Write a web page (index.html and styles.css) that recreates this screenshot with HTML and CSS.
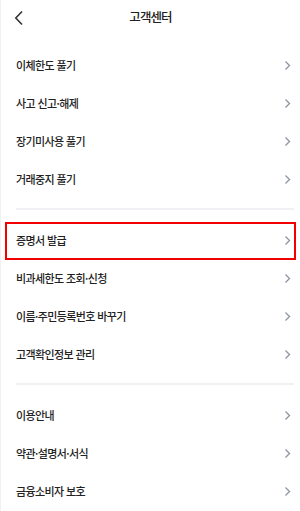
FILE: index.html
```html
<!DOCTYPE html>
<html lang="ko">
<head>
<meta charset="utf-8">
<link rel="stylesheet" href="styles.css">
</head>
<body>
<div class="page">
  <header class="top">
    <svg class="back" width="10" height="16" viewBox="0 0 10 16"><polyline points="8,1.5 1.8,8 8,14.5" fill="none" stroke="#333" stroke-width="1.6"/></svg>
    <h1 class="title">고객센터</h1>
  </header>
  <ul class="group">
    <li class="row"><span>이체한도 풀기</span><svg class="chev" width="7" height="11" viewBox="0 0 7 11"><polyline points="1.5,1.5 5.5,5.5 1.5,9.5" fill="none" stroke="#8c94a3" stroke-width="1.3"/></svg></li>
    <li class="row"><span>사고 신고·해제</span><svg class="chev" width="7" height="11" viewBox="0 0 7 11"><polyline points="1.5,1.5 5.5,5.5 1.5,9.5" fill="none" stroke="#8c94a3" stroke-width="1.3"/></svg></li>
    <li class="row"><span>장기미사용 풀기</span><svg class="chev" width="7" height="11" viewBox="0 0 7 11"><polyline points="1.5,1.5 5.5,5.5 1.5,9.5" fill="none" stroke="#8c94a3" stroke-width="1.3"/></svg></li>
    <li class="row"><span>거래중지 풀기</span><svg class="chev" width="7" height="11" viewBox="0 0 7 11"><polyline points="1.5,1.5 5.5,5.5 1.5,9.5" fill="none" stroke="#8c94a3" stroke-width="1.3"/></svg></li>
  </ul>
  <div class="sep"></div>
  <ul class="group">
    <li class="row hl"><span>증명서 발급</span><svg class="chev" width="7" height="11" viewBox="0 0 7 11"><polyline points="1.5,1.5 5.5,5.5 1.5,9.5" fill="none" stroke="#8c94a3" stroke-width="1.3"/></svg></li>
    <li class="row"><span>비과세한도 조회·신청</span><svg class="chev" width="7" height="11" viewBox="0 0 7 11"><polyline points="1.5,1.5 5.5,5.5 1.5,9.5" fill="none" stroke="#8c94a3" stroke-width="1.3"/></svg></li>
    <li class="row"><span>이름·주민등록번호 바꾸기</span><svg class="chev" width="7" height="11" viewBox="0 0 7 11"><polyline points="1.5,1.5 5.5,5.5 1.5,9.5" fill="none" stroke="#8c94a3" stroke-width="1.3"/></svg></li>
    <li class="row"><span>고객확인정보 관리</span><svg class="chev" width="7" height="11" viewBox="0 0 7 11"><polyline points="1.5,1.5 5.5,5.5 1.5,9.5" fill="none" stroke="#8c94a3" stroke-width="1.3"/></svg></li>
  </ul>
  <div class="sep"></div>
  <ul class="group">
    <li class="row"><span>이용안내</span><svg class="chev" width="7" height="11" viewBox="0 0 7 11"><polyline points="1.5,1.5 5.5,5.5 1.5,9.5" fill="none" stroke="#8c94a3" stroke-width="1.3"/></svg></li>
    <li class="row"><span>약관·설명서·서식</span><svg class="chev" width="7" height="11" viewBox="0 0 7 11"><polyline points="1.5,1.5 5.5,5.5 1.5,9.5" fill="none" stroke="#8c94a3" stroke-width="1.3"/></svg></li>
    <li class="row"><span>금융소비자 보호</span><svg class="chev" width="7" height="11" viewBox="0 0 7 11"><polyline points="1.5,1.5 5.5,5.5 1.5,9.5" fill="none" stroke="#8c94a3" stroke-width="1.3"/></svg></li>
  </ul>
</div>
</body>
</html>
```
FILE: styles.css
```css
html, body {
  margin: 0;
  padding: 0;
  background: #fff;
}
body {
  font-family: "Noto Sans CJK KR", "Noto Sans", sans-serif;
  color: #222;
}
.page {
  width: 300px;
  height: 511px;
  box-sizing: border-box;
  border-left: 1px solid #f1f1f3;
  overflow: hidden;
}
.top {
  position: relative;
  height: 46px;
  display: flex;
  justify-content: center;
}
.back {
  position: absolute;
  left: 13px;
  top: 10px;
}
.title {
  margin: 0;
  padding-top: 7px;
  font-size: 12.5px;
  font-weight: 500;
  line-height: 20px;
  letter-spacing: -0.9px;
  color: #222;
}
.group {
  list-style: none;
  margin: 0;
  padding: 0;
}
.row {
  position: relative;
  height: 38px;
  display: flex;
  align-items: center;
  justify-content: space-between;
  padding: 0 9px 0 15px;
  font-size: 11px;
  font-weight: 500;
  letter-spacing: -0.6px;
  color: #222;
}
.chev {
  display: block;
}
.hl::after {
  content: "";
  position: absolute;
  left: 4px;
  right: 4px;
  top: 1px;
  bottom: -1px;
  border: 2px solid #f20000;
}
.sep {
  height: 2px;
  background: #f0f1f4;
  margin: 10px 6px 11px 15px;
}
```
